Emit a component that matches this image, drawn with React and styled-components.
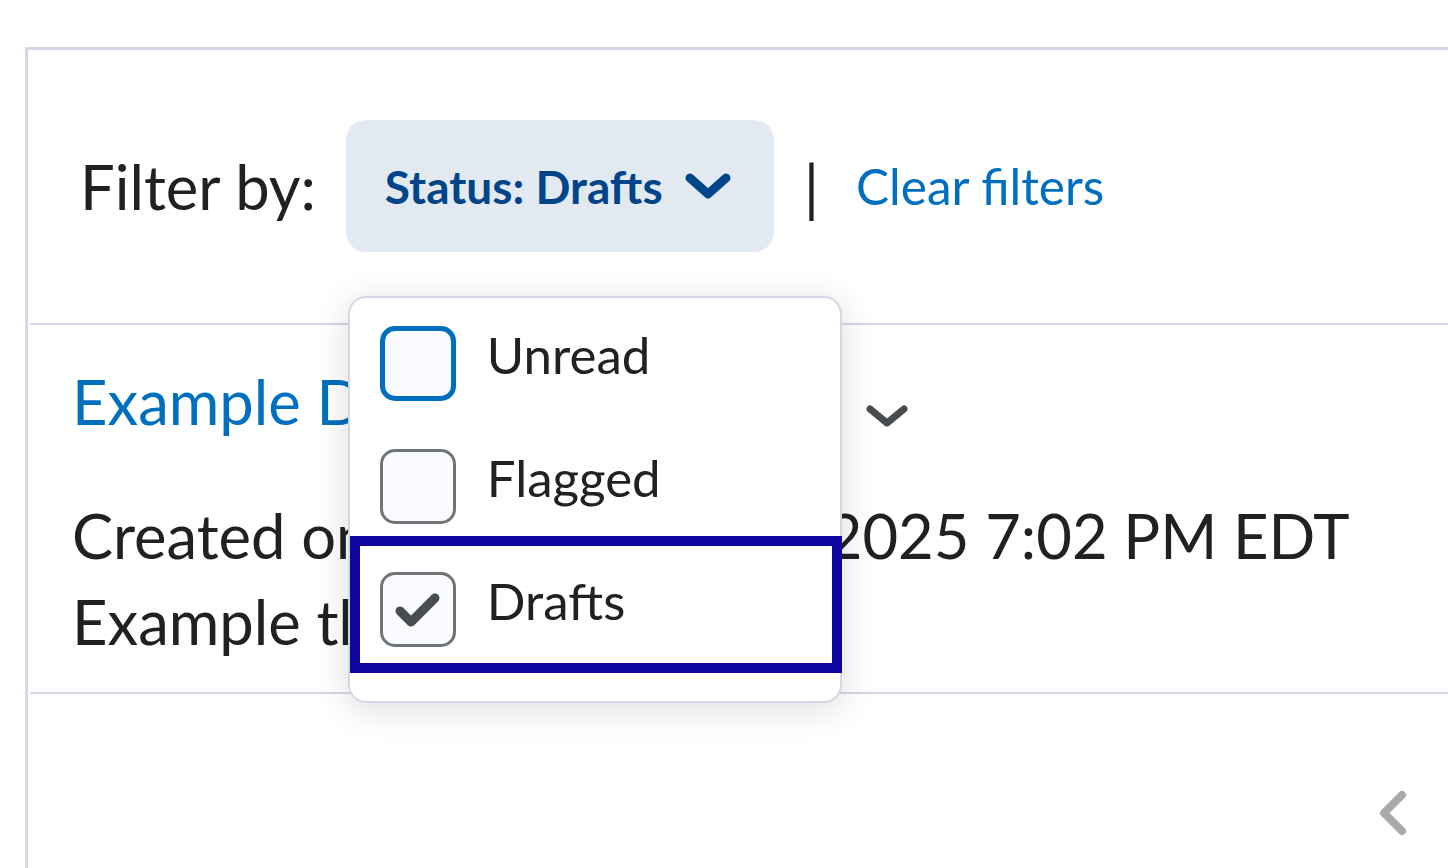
import React from 'react';
import styled, { createGlobalStyle } from 'styled-components';

const GlobalStyle = createGlobalStyle`
  html, body {
    margin: 0;
    padding: 0;
    background: #ffffff;
    overflow: hidden;
  }
  body {
    font-family: Lato, "Noto Sans", sans-serif;
    color: #202122;
  }
`;

const options = [
  { label: 'Unread', state: 'hover' },
  { label: 'Flagged', state: 'idle' },
  { label: 'Drafts', state: 'checked', focused: true },
];

const App = () => {
  return (
    <Page>
      <GlobalStyle />
      <Card>
        <FilterBar>
          <FilterLabel>Filter by:</FilterLabel>
          <DropdownWrap>
            <FilterButton>
              Status: Drafts
              <svg width="46" height="26" viewBox="0 0 46 26">
                <path d="M5 5 L23 21 L41 5" fill="none" stroke="#004489" strokeWidth="9" strokeLinecap="round" strokeLinejoin="round" />
              </svg>
            </FilterButton>
            <Menu>
              {options.map((o) => (
                <MenuItem key={o.label} $focused={o.focused}>
                  <Checkbox $state={o.state}>
                    {o.state === 'checked' && (
                      <svg width="45" height="34" viewBox="0 0 45 34">
                        <path d="M5 18 L16 29 L40 5" fill="none" stroke="#494c4e" strokeWidth="9" strokeLinecap="round" strokeLinejoin="round" />
                      </svg>
                    )}
                  </Checkbox>
                  <ItemLabel>{o.label}</ItemLabel>
                </MenuItem>
              ))}
            </Menu>
          </DropdownWrap>
          <Separator>|</Separator>
          <ClearLink>Clear filters</ClearLink>
        </FilterBar>

        <List>
          <Item>
            <TitleRow>
              <TitleLink>Example Discussion Topic One</TitleLink>
              <MoreButton>
                <svg width="42" height="22" viewBox="0 0 42 22">
                  <path d="M4 4 L21 18 L38 4" fill="none" stroke="#494c4e" strokeWidth="7" strokeLinecap="round" strokeLinejoin="round" />
                </svg>
              </MoreButton>
            </TitleRow>
            <Meta $first>Created on:{'\u00a0'} September 10, 2025 7:02 PM EDT</Meta>
            <Meta>Example thread description</Meta>
          </Item>
        </List>

        <Pager>
          <svg width="30" height="46" viewBox="0 0 30 46">
            <path d="M24 5 L6 23 L24 41" fill="none" stroke="#a8abad" strokeWidth="8" strokeLinecap="round" strokeLinejoin="round" />
          </svg>
        </Pager>
      </Card>
    </Page>
  );
};

export default App;

const Page = styled.div`
  height: 100vh;
  box-sizing: border-box;
  padding: 47px 0 0 25px;
  overflow: hidden;
`;

const Card = styled.div`
  min-height: 900px;
  border-top: 3px solid #d3d9e3;
  border-left: 3px solid #d3d9e3;
  background: #ffffff;
`;

const FilterBar = styled.div`
  display: flex;
  align-items: center;
  padding: 70px 0 71px 52px;
`;

const FilterLabel = styled.span`
  font-size: 61.5px;
  line-height: 72px;
  margin-right: 30px;
`;

const DropdownWrap = styled.div`
  position: relative;
`;

const FilterButton = styled.button`
  display: flex;
  align-items: center;
  gap: 22px;
  height: 132px;
  padding: 0 43px 0 39px;
  border: none;
  border-radius: 20px;
  background: #e3e9f1;
  color: #004489;
  font-family: Lato, sans-serif;
  font-size: 46px;
  font-weight: 700;
  cursor: pointer;
`;

const Menu = styled.div`
  position: absolute;
  top: 176px;
  left: 2px;
  width: 494px;
  box-sizing: border-box;
  padding: 4px 0 30px;
  border: 2px solid #d3d9e3;
  border-radius: 18px;
  background: #ffffff;
  box-shadow: 0 6px 36px rgba(0, 0, 0, 0.14);
  z-index: 10;
`;

const MenuItem = styled.div`
  position: relative;
  display: flex;
  align-items: flex-start;
  gap: 31px;
  height: 123px;
  box-sizing: border-box;
  padding: 24px 0 0 30px;

  ${({ $focused }) => $focused && `
    &::after {
      content: '';
      position: absolute;
      top: -12px;
      bottom: -2px;
      left: 0;
      right: -2px;
      border: 10px solid #10069f;
    }
  `}
`;

const Checkbox = styled.span`
  display: flex;
  align-items: center;
  justify-content: center;
  flex: none;
  width: 76px;
  height: 75px;
  box-sizing: border-box;
  border-radius: 15px;
  background: #f9fbff;
  border: ${({ $state }) => ($state === 'hover' ? '5px solid #006fbf' : '3px solid #6e7477')};
`;

const ItemLabel = styled.span`
  margin-top: 2px;
  font-size: 51px;
  line-height: 53px;
  color: #202122;
`;

const Separator = styled.span`
  margin-left: 30px;
  font-size: 61.5px;
  line-height: 72px;
  color: #202122;
`;

const ClearLink = styled.a`
  margin-left: 37px;
  font-size: 49.5px;
  line-height: 72px;
  color: #006fbf;
  cursor: pointer;
`;

const List = styled.div`
  border-top: 2px solid #d3d9e3;
  margin-left: 2px;
`;

const Item = styled.div`
  padding: 33px 0 28px 42px;
  border-bottom: 2px solid #d3d9e3;
`;

const TitleRow = styled.div`
  display: flex;
  align-items: flex-start;
  gap: 24px;
`;

const TitleLink = styled.a`
  display: block;
  max-width: 770px;
  overflow: hidden;
  white-space: nowrap;
  text-overflow: ellipsis;
  font-size: 61.5px;
  line-height: 86px;
  color: #006fbf;
  cursor: pointer;
`;

const MoreButton = styled.span`
  display: flex;
  flex: none;
  margin-top: 47px;
`;

const Meta = styled.div`
  margin-top: ${({ $first }) => ($first ? '48px' : '0')};
  font-size: 61.5px;
  line-height: 86px;
  color: #202122;
`;

const Pager = styled.div`
  display: flex;
  justify-content: flex-end;
  padding: 96px 40px 0 0;
`;
